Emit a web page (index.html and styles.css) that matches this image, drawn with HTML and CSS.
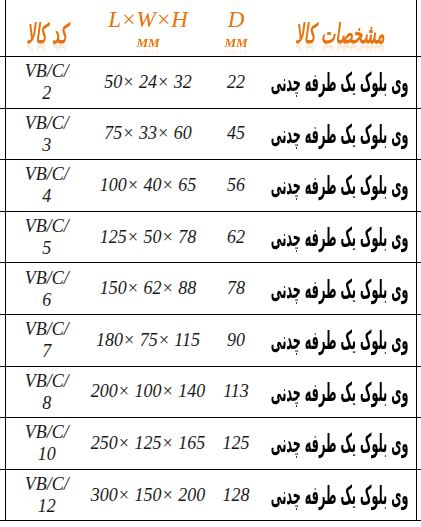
FILE: index.html
```html
<!DOCTYPE html>
<html lang="fa">
<head>
<meta charset="utf-8">
<title>مشخصات کالا</title>
<link rel="stylesheet" href="styles.css">
</head>
<body>
<table class="spec" dir="ltr">
  <colgroup>
    <col class="c-edge">
    <col class="c-code">
    <col class="c-dim">
    <col class="c-d">
    <col class="c-desc">
    <col class="c-edge">
  </colgroup>
  <thead>
    <tr class="head">
      <th class="edge"></th>
      <th class="code"><div class="fit"><span class="h-fa" dir="rtl">کد کالا</span></div></th>
      <th><span class="h-lat">L×W×H</span><span class="h-unit">MM</span></th>
      <th><span class="h-lat">D</span><span class="h-unit">MM</span></th>
      <th class="desc"><div class="fit"><span class="h-fa" dir="rtl">مشخصات کالا</span></div></th>
      <th class="edge"></th>
    </tr>
  </thead>
  <tbody>
    <tr><td class="edge"></td><td class="code">VB/C/<br>2</td><td class="num">50× 24× 32</td><td class="num">22</td><td class="desc"><div class="fit"><span class="fa" dir="rtl">وی بلوک یک طرفه چدنی</span></div></td><td class="edge"></td></tr>
    <tr><td class="edge"></td><td class="code">VB/C/<br>3</td><td class="num">75× 33× 60</td><td class="num">45</td><td class="desc"><div class="fit"><span class="fa" dir="rtl">وی بلوک یک طرفه چدنی</span></div></td><td class="edge"></td></tr>
    <tr><td class="edge"></td><td class="code">VB/C/<br>4</td><td class="num">100× 40× 65</td><td class="num">56</td><td class="desc"><div class="fit"><span class="fa" dir="rtl">وی بلوک یک طرفه چدنی</span></div></td><td class="edge"></td></tr>
    <tr><td class="edge"></td><td class="code">VB/C/<br>5</td><td class="num">125× 50× 78</td><td class="num">62</td><td class="desc"><div class="fit"><span class="fa" dir="rtl">وی بلوک یک طرفه چدنی</span></div></td><td class="edge"></td></tr>
    <tr><td class="edge"></td><td class="code">VB/C/<br>6</td><td class="num">150× 62× 88</td><td class="num">78</td><td class="desc"><div class="fit"><span class="fa" dir="rtl">وی بلوک یک طرفه چدنی</span></div></td><td class="edge"></td></tr>
    <tr><td class="edge"></td><td class="code">VB/C/<br>7</td><td class="num">180× 75× 115</td><td class="num">90</td><td class="desc"><div class="fit"><span class="fa" dir="rtl">وی بلوک یک طرفه چدنی</span></div></td><td class="edge"></td></tr>
    <tr><td class="edge"></td><td class="code">VB/C/<br>8</td><td class="num">200× 100× 140</td><td class="num">113</td><td class="desc"><div class="fit"><span class="fa" dir="rtl">وی بلوک یک طرفه چدنی</span></div></td><td class="edge"></td></tr>
    <tr><td class="edge"></td><td class="code">VB/C/<br>10</td><td class="num">250× 125× 165</td><td class="num">125</td><td class="desc"><div class="fit"><span class="fa" dir="rtl">وی بلوک یک طرفه چدنی</span></div></td><td class="edge"></td></tr>
    <tr><td class="edge"></td><td class="code">VB/C/<br>12</td><td class="num">300× 150× 200</td><td class="num">128</td><td class="desc"><div class="fit"><span class="fa" dir="rtl">وی بلوک یک طرفه چدنی</span></div></td><td class="edge"></td></tr>
  </tbody>
</table>
</body>
</html>
```

FILE: styles.css
```css
html, body {
  margin: 0;
  padding: 0;
  background: #ffffff;
}

.spec {
  width: 421px;
  border-collapse: collapse;
  table-layout: fixed;
  font-family: "Liberation Serif", serif;
  color: #1a1a1a;
}

.c-edge { width: 5px; }
.c-code { width: 83px; }
.c-dim { width: 120px; }
.c-d { width: 56px; }
.c-desc { width: 152px; }

.spec th,
.spec td {
  padding: 0;
  text-align: center;
  vertical-align: middle;
  border-bottom: 1px solid #000;
}

.spec .code { border-left: 1px solid #000; }
.spec .desc { border-right: 1px solid #000; }

.fit {
  display: flex;
  justify-content: center;
  align-items: center;
}

.head th {
  height: 56px;
  color: #e8730e;
  font-weight: bold;
}

.h-fa {
  flex: none;
  display: inline-block;
  font-family: "DejaVu Sans", sans-serif;
  font-size: 20px;
  font-style: italic;
  white-space: nowrap;
  margin-top: 12px;
  transform: scale(0.76, 1.35);
  -webkit-box-reflect: below -9px linear-gradient(transparent 50%, rgba(255,255,255,0.35));
}

.h-lat {
  display: block;
  font-size: 23px;
  font-style: italic;
  font-weight: normal;
  line-height: 26px;
  margin-top: 2px;
}

.h-unit {
  display: inline-block;
  font-size: 13px;
  font-style: italic;
  font-weight: bold;
  line-height: 16px;
  -webkit-box-reflect: below -4px linear-gradient(transparent 50%, rgba(255,255,255,0.35));
}

.spec td {
  height: 50.6px;
}

.spec td.code {
  font-size: 18px;
  font-style: italic;
  line-height: 22px;
}

.spec td.num {
  font-size: 18px;
  font-style: italic;
  white-space: nowrap;
}

.fa {
  flex: none;
  display: inline-block;
  font-family: "DejaVu Sans", sans-serif;
  font-size: 19px;
  font-weight: bold;
  color: #000;
  white-space: nowrap;
  transform: scale(0.59, 1.35);
}
```
